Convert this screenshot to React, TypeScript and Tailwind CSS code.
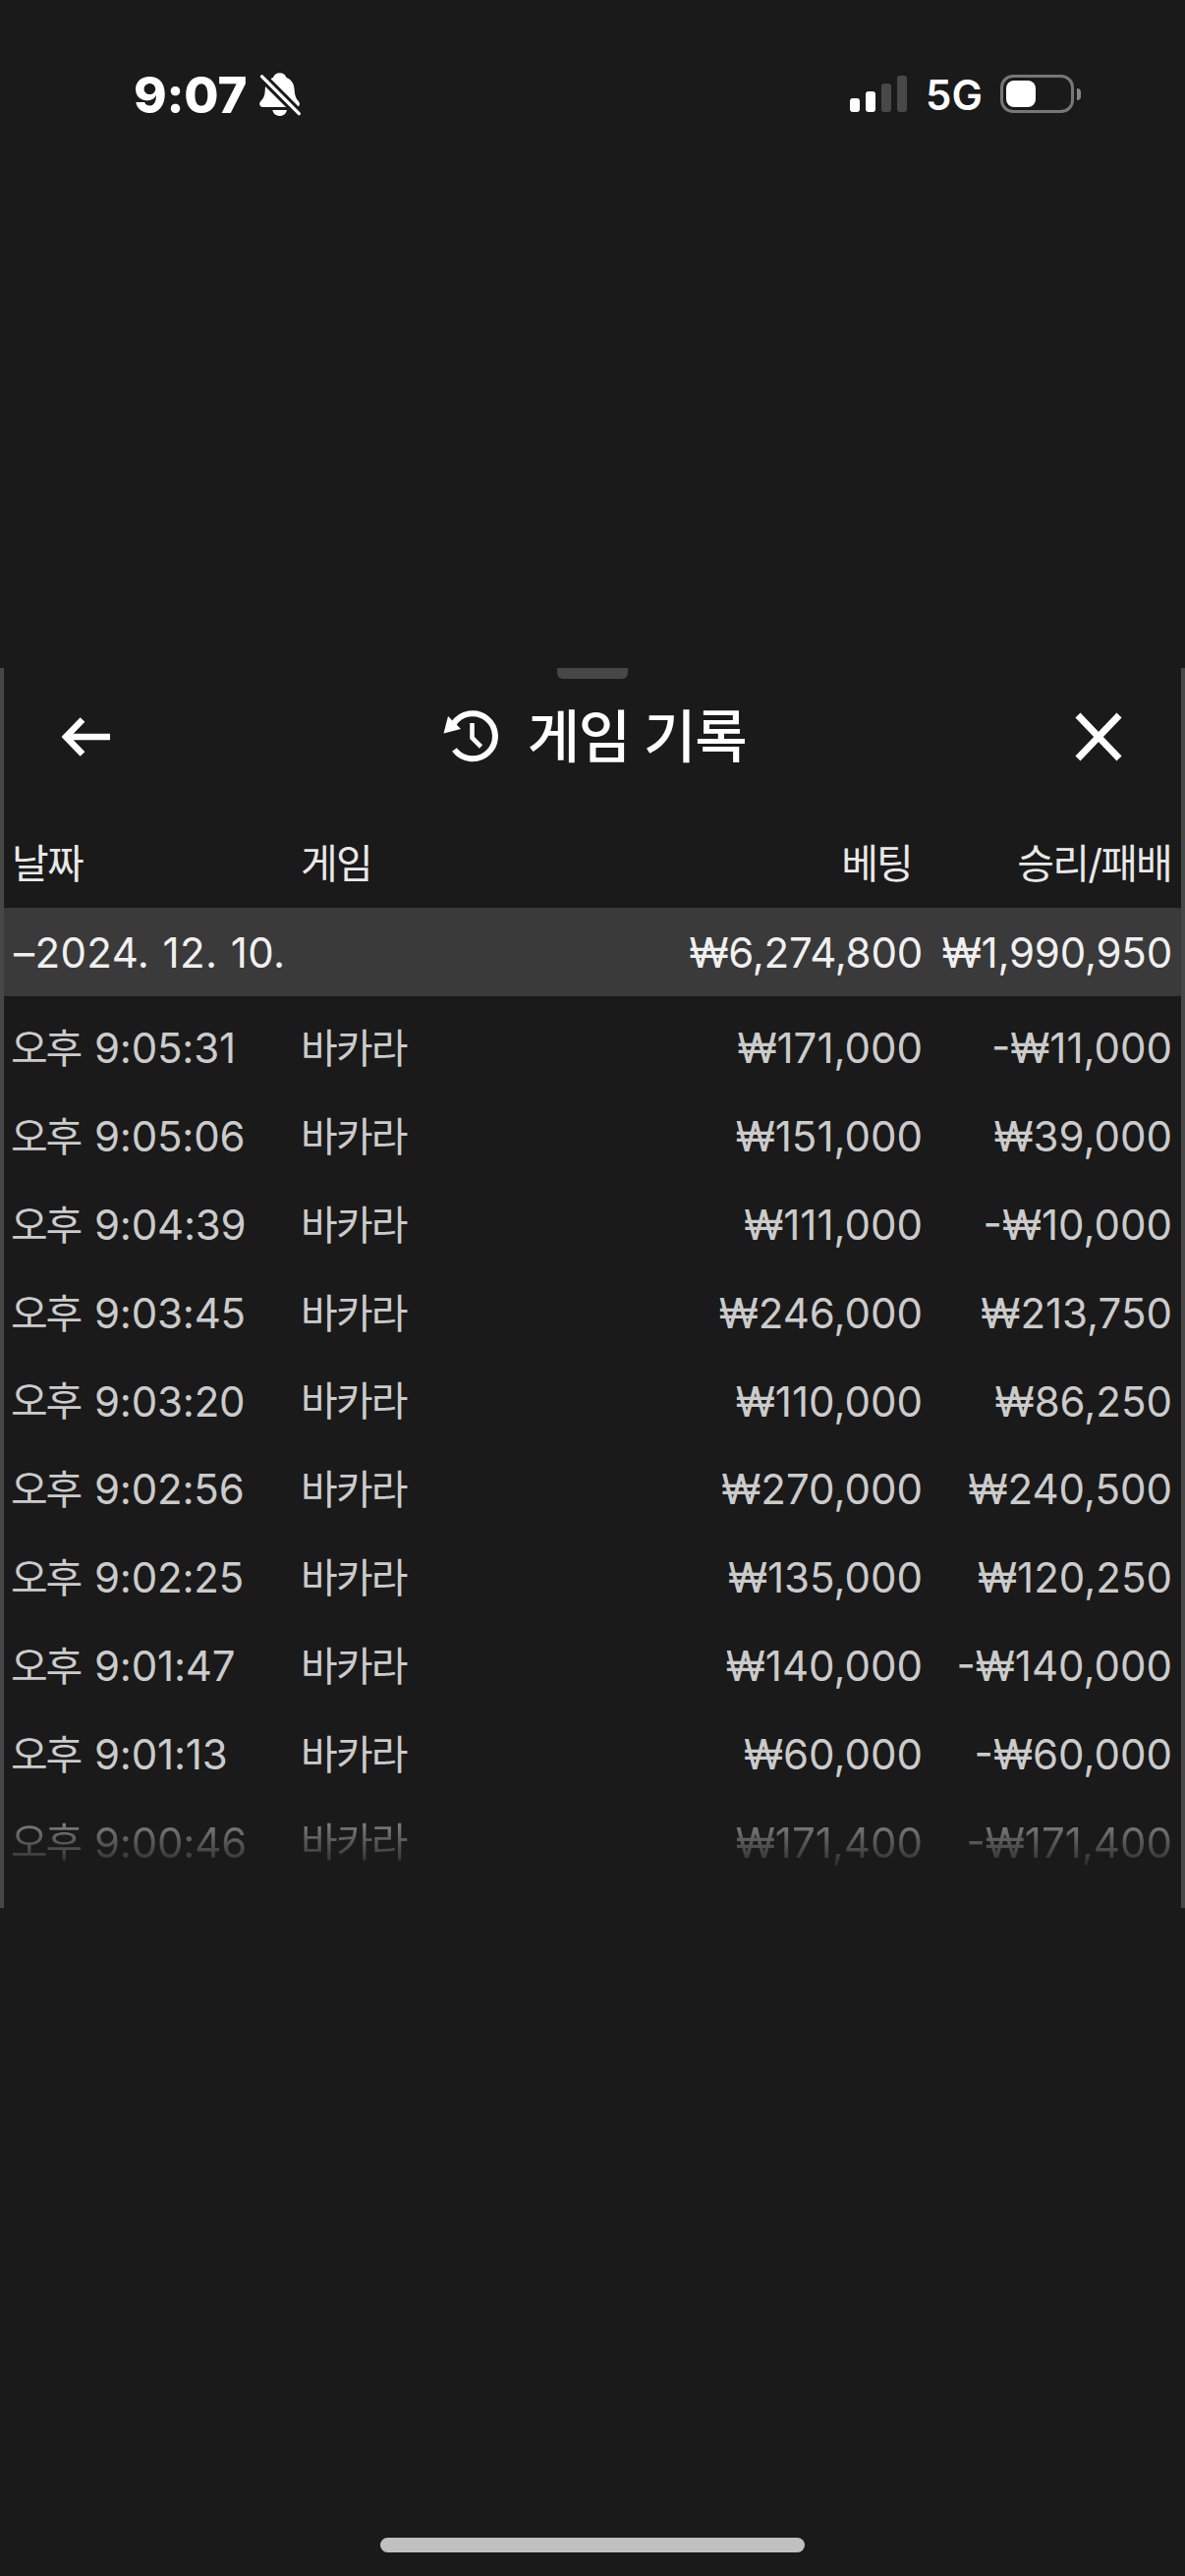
import React from 'react';

interface GameRecord {
  time: string;
  bet: string;
  result: string;
}

const records: GameRecord[] = [
  { time: '9:05:31', bet: '₩171,000', result: '-₩11,000' },
  { time: '9:05:06', bet: '₩151,000', result: '₩39,000' },
  { time: '9:04:39', bet: '₩111,000', result: '-₩10,000' },
  { time: '9:03:45', bet: '₩246,000', result: '₩213,750' },
  { time: '9:03:20', bet: '₩110,000', result: '₩86,250' },
  { time: '9:02:56', bet: '₩270,000', result: '₩240,500' },
  { time: '9:02:25', bet: '₩135,000', result: '₩120,250' },
  { time: '9:01:47', bet: '₩140,000', result: '-₩140,000' },
  { time: '9:01:13', bet: '₩60,000', result: '-₩60,000' },
  { time: '9:00:46', bet: '₩171,400', result: '-₩171,400' },
];

const BellOffIcon = () => (
  <svg width="43" height="45" viewBox="0 0 43 45" fill="none">
    <path
      d="M20.7 0.2C24 0.2 26.7 2 27.3 4.8C32.5 7 35.2 11 35.6 17C36 23 37 26 39.3 28.6C40.6 30.1 41 31.3 40.8 32.6C40.5 34.2 39.3 35 37.5 35H3.8C1.7 35 0.3 33.9 0.2 32C0.1 30.6 0.8 29.5 2 28.2C4.6 25.6 5.6 23 5.8 17C6 11 8.9 7 14.1 4.8C14.7 2 17.4 0.2 20.7 0.2Z"
      fill="#fff"
    />
    <path d="M13.3 38H28C27.2 41.8 24.4 44 20.7 44C17 44 14.1 41.8 13.3 38Z" fill="#fff" />
    <path d="M-2 -0.7L44.7 46" stroke="#1a1a1a" strokeWidth="9.4" />
    <path d="M2.6 3.9L40.3 41.6" stroke="#fff" strokeWidth="3.4" strokeLinecap="round" />
  </svg>
);

const HistoryIcon = () => (
  <svg width="56" height="54" viewBox="0 0 56 54" fill="none">
    <path d="M10.5 14A23 23 0 1 1 11.5 40" stroke="#fff" strokeWidth="6" />
    <path d="M5 6L0.5 23.5L18 19Z" fill="#fff" />
    <path d="M29.5 13V28L38.5 37" stroke="#fff" strokeWidth="4.6" />
  </svg>
);

const StatusBar = () => (
  <div className="flex h-[190px] items-start justify-between pt-[74px] pr-[106px] pl-[136px]">
    <div className="flex h-[45px] items-center">
      <span className="w-[128px] text-[51px] leading-[45px] font-extrabold tracking-[-0.2px]">
        9:07
      </span>
      <BellOffIcon />
    </div>
    <div className="flex h-[43px] items-center">
      <div className="flex h-[37px] items-end gap-[6px]">
        <div className="h-[14px] w-[10px] rounded-[3px] bg-white" />
        <div className="h-[21px] w-[10px] rounded-[3px] bg-white" />
        <div className="h-[29px] w-[10px] rounded-[3px] bg-[#484848]" />
        <div className="h-[37px] w-[10px] rounded-[3px] bg-[#484848]" />
      </div>
      <span className="ml-[19px] w-[76px] pt-[3px] text-[42px] leading-[40px] font-semibold">
        5G
      </span>
      <div className="h-[39px] w-[75px] rounded-[13px] border-[3px] border-[#777] p-[3px]">
        <div className="h-[27px] w-[30px] rounded-[8px] bg-white" />
      </div>
      <div className="ml-[3px] h-[12px] w-[4px] rounded-r-full bg-[#888]" />
    </div>
  </div>
);

const PanelHeader = () => (
  <header className="flex flex-col">
    <div className="mx-auto h-[11px] w-[72px] rounded-b-[6px] bg-[#474747]" />
    <div className="flex h-[121px] items-center justify-between pr-[60px] pb-[3px] pl-[59px]">
      <svg width="50" height="40" viewBox="0 0 50 40" fill="none">
        <path d="M21 2.5L4 20L21 37.5M4 20H49" stroke="#fff" strokeWidth="6.6" />
      </svg>
      <div className="flex items-center pl-[3px]">
        <HistoryIcon />
        <h1 className="ml-[30px] text-[58px] leading-[60px] font-medium tracking-[-1.3px]">
          게임 기록
        </h1>
      </div>
      <svg width="48" height="50" viewBox="0 0 48 50" fill="none">
        <path d="M3 3L45 47M45 3L3 47" stroke="#fff" strokeWidth="7" />
      </svg>
    </div>
  </header>
);

export default function App() {
  return (
    <div className="flex h-[2622px] w-[1206px] flex-col overflow-hidden bg-[#1a1a1a] font-[Inter,'Noto_Sans_CJK_KR',sans-serif] text-white">
      <StatusBar />

      <main className="mt-[490px] h-[1262px] border-x-[4px] border-[#474747]">
        <PanelHeader />

        {/* Cabeçalho da tabela */}
        <div className="grid h-[112px] grid-cols-[294px_1fr_254px] pt-[3px] pr-[10px] pl-[8px] text-[41px] leading-[129px] tracking-[-1.8px] text-[#e8e8e8]">
          <span>날짜</span>
          <div className="flex justify-between pr-[10px]">
            <span>게임</span>
            <span>베팅</span>
          </div>
          <span className="text-right">승리/패배</span>
        </div>

        {/* Total do dia */}
        <div className="flex h-[90px] items-center bg-[#3a3a3a] pr-[9px] pl-[10px] text-[42px] tracking-[-0.2px] text-[#f0f0f0]">
          <span className="flex-1 tracking-[0.4px] [word-spacing:1px]">–2024. 12. 10.</span>
          <span>₩6,274,800</span>
          <span className="w-[254px] text-right">₩1,990,950</span>
        </div>

        <ul className="mt-[8px] flex flex-col text-[42px] text-[#cbcbcb]">
          {records.map((r, i) => (
            <li
              key={r.time}
              className={`grid h-[89.8px] grid-cols-[295px_1fr_254px] items-center pr-[9px] pl-[7px] ${
                i === records.length - 1
                  ? 'bg-linear-to-b from-[#a0a0a0] from-10% to-[#202020] to-85% bg-clip-text text-transparent'
                  : ''
              }`}
            >
              <span className="flex items-center">
                <span className="w-[85px] pt-[2px] text-[41px] tracking-[-2.2px]">오후</span>
                <span className="tracking-[-0.2px]">{r.time}</span>
              </span>
              <div className="flex items-center justify-between">
                <span className="pt-[2px] text-[41px] tracking-[-1.8px]">바카라</span>
                <span>{r.bet}</span>
              </div>
              <span className="text-right">{r.result}</span>
            </li>
          ))}
        </ul>
      </main>

      <div className="mx-auto mt-auto mb-[24px] h-[15px] w-[432px] rounded-full bg-[#c0c0c0]" />
    </div>
  );
}
